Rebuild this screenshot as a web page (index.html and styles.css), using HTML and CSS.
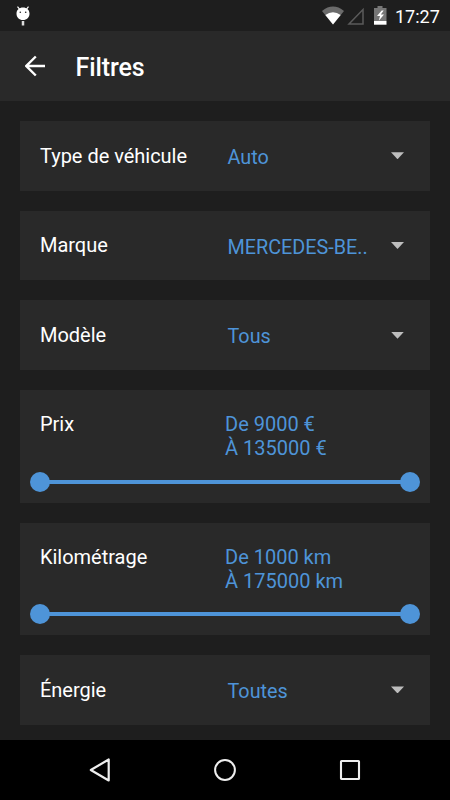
FILE: index.html
```html
<!DOCTYPE html>
<html lang="fr">
<head>
<meta charset="utf-8">
<title>Filtres</title>
<link rel="stylesheet" href="styles.css">
</head>
<body>
<div class="screen">
  <div class="status">
    <svg class="debug" width="14" height="22" viewBox="0 0 14 22"><path d="M1.500.7l2 2.500M12.500.7l-2 2.500" stroke="#fff" stroke-width="1.200"/><path d="M7 1.600c3.800 0 6.500 2.500 6.500 6 0 3.900-2.700 6.500-6.500 6.500S.5 11.500.5 7.600c0-3.500 2.700-6 6.500-6z" fill="#fff"/><circle cx="4.300" cy="6.200" r=".8" fill="#222"/><circle cx="9.700" cy="6.200" r=".8" fill="#222"/><path d="M7 15v4.500" stroke="#ddd" stroke-width="2.500"/></svg>
    <svg class="signals" width="78" height="24" viewBox="0 0 78 24"><path d="M0 8Q11-.8 22 8L11 21.500z" fill="#6b6b6b"/><path d="M3.300 12Q11 6.500 18.700 12L11 21.500z" fill="#fff"/><path d="M27 20.900H41V6.500z" fill="none" stroke="#5b5b5b" stroke-width="1.500"/><path d="M55.500 3h5v2h4v13H52V5h3.500z" fill="#777"/><path d="M52 18h12.500v3.700H52z" fill="#fff"/><path d="M59.700 7.500L55 13h3l-1.200 4.700L62 11.500h-3.200L61.700 7.500z" fill="#fff"/></svg>
    <span class="clock">17:27</span>
  </div>
  <header class="toolbar">
    <svg class="back" width="22" height="22" viewBox="0 0 22 22"><path d="M20 11H2M10.800 1.500L1.300 11l9.500 9.500" fill="none" stroke="#fff" stroke-width="2.400"/></svg>
    <h1>Filtres</h1>
  </header>
  <main>
    <section class="card select"><span class="label">Type de véhicule</span><span class="value">Auto</span><i class="caret"></i></section>
    <section class="card select"><span class="label">Marque</span><span class="value">MERCEDES-BE..</span><i class="caret"></i></section>
    <section class="card select"><span class="label">Modèle</span><span class="value">Tous</span><i class="caret"></i></section>
    <section class="card range">
      <div class="row"><span class="label">Prix</span><span class="bounds">De 9000 €<br>À 135000 €</span></div>
      <div class="slider"><i class="thumb"></i><i class="track"></i><i class="thumb"></i></div>
    </section>
    <section class="card range">
      <div class="row"><span class="label">Kilométrage</span><span class="bounds">De 1000 km<br>À 175000 km</span></div>
      <div class="slider"><i class="thumb"></i><i class="track"></i><i class="thumb"></i></div>
    </section>
    <section class="card select"><span class="label">Énergie</span><span class="value">Toutes</span><i class="caret"></i></section>
  </main>
  <nav>
    <svg width="26" height="26" viewBox="0 0 26 26"><path d="M21.700 2.500v21L3.800 13z" fill="none" stroke="#eee" stroke-width="2.200" stroke-linejoin="round"/></svg>
    <svg width="26" height="26" viewBox="0 0 26 26"><circle cx="13" cy="13" r="9.900" fill="none" stroke="#eee" stroke-width="2"/></svg>
    <svg width="26" height="26" viewBox="0 0 26 26"><rect x="4" y="4" width="18" height="18" rx=".5" fill="none" stroke="#eee" stroke-width="2.100"/></svg>
  </nav>
</div>
</body>
</html>
```

FILE: styles.css
```css
* { box-sizing: border-box; }
body { margin: 0; background: #1e1e1e; font-family: Roboto, sans-serif; }
.screen { width: 450px; height: 800px; display: flex; flex-direction: column; overflow: hidden; color: #fff; }
.status { height: 31px; flex: none; display: flex; align-items: flex-start; background: #1e1e1e; }
.debug { margin: 6px 0 0 16px; }
.signals { margin: 3px 0 0 292px; }
.clock { margin: 6px 0 0 -5px; font-size: 18px; line-height: 21px; }
.toolbar { height: 70px; flex: none; display: flex; align-items: center; padding-left: 25px; background: #292929; }
.back { margin-right: 28.500px; }
h1 { margin: 4px 0 0; font-size: 25px; letter-spacing: -0.1px; line-height: 30px; font-weight: 500; }
main { flex: 1; padding: 20px 20px 0; display: flex; flex-direction: column; gap: 20px; }
.card { flex: none; background: #292929; font-size: 20px; }
.label { letter-spacing: -0.02px; }
.select { height: 69.700px; display: grid; grid-template-columns: 187.500px 163.500px 14px; align-items: center; padding-left: 20px; line-height: 24px; }
.value { color: #4e94d8; padding-top: 4px; font-size: 19.800px; white-space: nowrap; }
.select .label { margin-top: -0.400px; }
.caret { width: 13px; height: 7px; background: #bdbdbd; clip-path: polygon(0 0, 100% 0, 50% 100%); }
.range { height: 112.500px; padding: 23.300px 10px 0; }
.row { display: grid; grid-template-columns: 185px 1fr; padding-left: 10px; line-height: 23.700px; }
.bounds { color: #4e94d8; }
.slider { margin-top: 11.200px; height: 20px; display: flex; align-items: center; }
.thumb { width: 20px; height: 20px; border-radius: 50%; background: #4e94d8; }
.track { flex: 1; height: 4px; margin: 0 -1px; background: #4e94d8; }
nav { height: 60px; flex: none; display: flex; justify-content: space-between; align-items: center; padding: 0 87px; background: #000; }
```
